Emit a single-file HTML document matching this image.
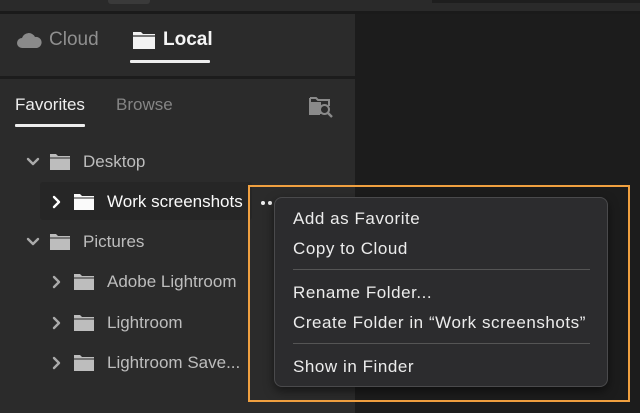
<!DOCTYPE html>
<html><head><meta charset="utf-8"><style>
*{margin:0;padding:0;box-sizing:border-box}
body{width:640px;height:413px;overflow:hidden;background:#1c1c1c;font-family:"Liberation Sans",sans-serif;position:relative}
.a{position:absolute}
.t{position:absolute;white-space:nowrap;font-size:17px;line-height:20px}
.m{font-size:17px;letter-spacing:0.55px;color:#ececec}
</style></head><body>
<div class="a" style="left:0;top:0;width:640px;height:11px;background:#2a2a2a"></div>
<div class="a" style="left:108px;top:0;width:42px;height:4px;background:#3a3a3a;border-radius:0 0 3px 3px"></div>
<div class="a" style="left:432px;top:0;width:208px;height:3px;background:#1e1e1e"></div>
<div class="a" style="left:0;top:11px;width:640px;height:3px;background:#1a1a1a"></div>
<div class="a" style="left:0;top:14px;width:355px;height:399px;background:#2b2b2b"></div>
<div class="a" style="left:0;top:76px;width:355px;height:3px;background:#1c1c1c"></div>
<!-- header -->
<svg class="a" style="left:17px;top:31px" width="25" height="18" viewBox="0 0 25 18"><path d="M5 17a5 5 0 0 1 0-10 7 7 0 0 1 13-1 5.5 5.5 0 0 1 2 11z" fill="#8a8a8a"/></svg>
<div class="t" style="left:49px;top:30px;font-size:19px;color:#8f8f8f">Cloud</div>
<svg class="a" style="left:133px;top:31px" width="22" height="18" viewBox="0 0 22 18"><path d="M0 1h8l2 2h12v15H0z" fill="#f2f2f2"/><path d="M0 5h22" stroke="#2b2b2b" stroke-width="1.2"/></svg>
<div class="t" style="left:163px;top:30px;font-size:19px;color:#f5f5f5;font-weight:bold">Local</div>
<div class="a" style="left:130px;top:60px;width:80px;height:3px;background:#eee;border-radius:1px"></div>
<div class="t" style="left:15px;top:95px;color:#eee">Favorites</div>
<div class="t" style="left:116px;top:95px;color:#858585">Browse</div>
<div class="a" style="left:15px;top:124px;width:70px;height:3px;background:#eee;border-radius:1px"></div>
<svg class="a" style="left:309px;top:96px" width="24" height="22" viewBox="0 0 24 22"><path d="M1 2h6l2 2h11v6M1 2v16h10" fill="none" stroke="#8a8a8a" stroke-width="2"/><rect x="1" y="6" width="11" height="12" fill="#8a8a8a"/><circle cx="15.5" cy="13.5" r="4.5" fill="#2b2b2b" stroke="#8a8a8a" stroke-width="2"/><path d="M19 17l4 4" stroke="#8a8a8a" stroke-width="2.4"/></svg>
<!-- tree -->
<div class="a" style="left:40px;top:182px;width:212px;height:38px;background:#262626;border-radius:3px"></div>
<svg class="a" style="left:0;top:140px" width="260" height="240" viewBox="0 0 260 240">
<g fill="none" stroke-width="2.4" stroke-linecap="round" stroke-linejoin="round">
<path d="M28 19l5 5 5-5" stroke="#aaa"/>
<path d="M28 99l5 5 5-5" stroke="#aaa"/>
<path d="M54 57l5 5-5 5" stroke="#fff"/>
<path d="M54 137l5 5-5 5" stroke="#aaa"/>
<path d="M54 178l5 5-5 5" stroke="#aaa"/>
<path d="M54 218l5 5-5 5" stroke="#aaa"/>
</g>
<g fill="#bdbdbd">
<path d="M50 14h6l2 2h12v14H50z"/><path d="M50 94h6l2 2h12v14H50z"/>
<path d="M74 134h6l2 2h12v14H74z"/><path d="M74 175h6l2 2h12v14H74z"/><path d="M74 215h6l2 2h12v14H74z"/>
</g>
<path d="M74 54h6l2 2h12v14H74z" fill="#fafafa"/>
<g stroke="#2b2b2b" stroke-width="1.1"><path d="M50 18h20M50 98h20M74 138h20M74 179h20M74 219h20"/><path d="M74 58h20" stroke="#262626"/></g>
</svg>
<div class="t" style="left:83px;top:152px;color:#bdbdbd">Desktop</div>
<div class="t" style="left:107px;top:192px;color:#fafafa">Work screenshots</div>
<div class="t" style="left:83px;top:232px;color:#bdbdbd">Pictures</div>
<div class="t" style="left:107px;top:272px;color:#bdbdbd">Adobe Lightroom</div>
<div class="t" style="left:107px;top:313px;color:#bdbdbd">Lightroom</div>
<div class="t" style="left:107px;top:353px;color:#bdbdbd">Lightroom Save...</div>
<!-- orange box -->
<div class="a" style="left:248px;top:185px;width:382px;height:217px;border:2.5px solid #f0a040"></div>
<div class="a" style="left:261px;top:201px;width:4px;height:4px;border-radius:50%;background:#eee"></div>
<div class="a" style="left:268px;top:201px;width:4px;height:4px;border-radius:50%;background:#eee"></div>
<!-- menu -->
<div class="a" style="left:274px;top:197px;width:334px;height:190px;background:#2c2c2e;border:1px solid #4a4a4c;border-radius:8px;box-shadow:0 4px 10px rgba(0,0,0,.5)"></div>
<div class="t m" style="left:293px;top:209px">Add as Favorite</div>
<div class="t m" style="left:293px;top:239px">Copy to Cloud</div>
<div class="a" style="left:293px;top:269px;width:297px;height:1px;background:#555"></div>
<div class="t m" style="left:293px;top:283px">Rename Folder...</div>
<div class="t m" style="left:293px;top:313px">Create Folder in “Work screenshots”</div>
<div class="a" style="left:293px;top:343px;width:297px;height:1px;background:#555"></div>
<div class="t m" style="left:293px;top:357px">Show in Finder</div>
</body></html>
